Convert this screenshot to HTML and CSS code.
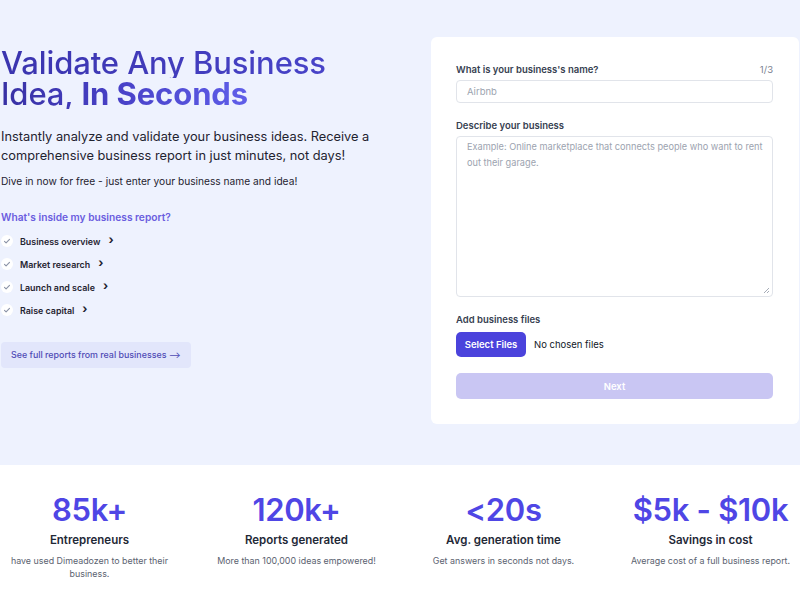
FILE: index.html
```html
<!DOCTYPE html>
<html>
<head>
<meta charset="utf-8">
<link rel="stylesheet" href="styles.css">
</head>
<body>
<div class="hero">
  <div class="container hero-grid">
    <div class="intro">
      <h1 class="title"><span class="line line1">Validate Any Business</span> <span class="line line2">Idea, <strong>In Seconds</strong></span></h1>
      <p class="lead">Instantly analyze and validate your business ideas. Receive a comprehensive business report in just minutes, not days!</p>
      <p class="sub">Dive in now for free - just enter your business name and idea!</p>
      <h3 class="inside">What's inside my business report?</h3>
      <ul class="features">
        <li><span class="check"><svg viewBox="0 0 10 10" width="10" height="10"><path d="M2.5 5.4l1.6 1.5 3.4-3.6" fill="none" stroke="#8b93a7" stroke-width="1.1" stroke-linecap="round" stroke-linejoin="round"/></svg></span>Business overview<span class="chev">›</span></li>
        <li><span class="check"><svg viewBox="0 0 10 10" width="10" height="10"><path d="M2.5 5.4l1.6 1.5 3.4-3.6" fill="none" stroke="#8b93a7" stroke-width="1.1" stroke-linecap="round" stroke-linejoin="round"/></svg></span>Market research<span class="chev">›</span></li>
        <li><span class="check"><svg viewBox="0 0 10 10" width="10" height="10"><path d="M2.5 5.4l1.6 1.5 3.4-3.6" fill="none" stroke="#8b93a7" stroke-width="1.1" stroke-linecap="round" stroke-linejoin="round"/></svg></span>Launch and scale<span class="chev">›</span></li>
        <li><span class="check"><svg viewBox="0 0 10 10" width="10" height="10"><path d="M2.5 5.4l1.6 1.5 3.4-3.6" fill="none" stroke="#8b93a7" stroke-width="1.1" stroke-linecap="round" stroke-linejoin="round"/></svg></span>Raise capital<span class="chev">›</span></li>
      </ul>
      <a class="reports-btn">See full reports from real businesses <span class="arrow">⟶</span></a>
    </div>
    <div class="card">
      <div class="label-row"><label class="label">What is your business's name?</label><span class="step">1/3</span></div>
      <div class="input">Airbnb</div>
      <label class="label label-gap">Describe your business</label>
      <div class="textarea">Example: Online marketplace that connects people who want to rent out their garage.
        <svg class="grip" viewBox="0 0 8 8" width="8" height="8"><path d="M7 2L2 7M7 5L5 7" stroke="#9ca3af" stroke-width="0.9"/></svg>
      </div>
      <label class="label label-gap2">Add business files</label>
      <div class="files-row"><span class="select-btn">Select Files</span><span class="no-files">No chosen files</span></div>
      <div class="next-btn">Next</div>
    </div>
  </div>
</div>
<div class="stats">
  <div class="container stats-grid">
    <div class="stat"><div class="num">85k+</div><div class="stat-title">Entrepreneurs</div><div class="stat-desc">have used Dimeadozen to better their business.</div></div>
    <div class="stat"><div class="num">120k+</div><div class="stat-title">Reports generated</div><div class="stat-desc">More than 100,000 ideas empowered!</div></div>
    <div class="stat"><div class="num">&lt;20s</div><div class="stat-title">Avg. generation time</div><div class="stat-desc">Get answers in seconds not days.</div></div>
    <div class="stat"><div class="num">$5k - $10k</div><div class="stat-title">Savings in cost</div><div class="stat-desc">Average cost of a full business report.</div></div>
  </div>
</div>
</body>
</html>
```
FILE: styles.css
```css
* { box-sizing: border-box; }
html, body { margin: 0; padding: 0; overflow: hidden; }
body { font-family: Inter, "Noto Sans", sans-serif; color: #1f2937; background: #fff; }

.container { width: 828px; margin-left: -14px; }

.hero { background: #eef2fe; height: 465px; padding-top: 37px; }
.hero-grid { display: flex; justify-content: space-between; padding: 0 15px; }

.intro { width: 400px; padding-top: 10px; }
.title { margin: 0; font-size: 31px; line-height: 31px; font-weight: 500; letter-spacing: -0.1px; }
.line { display: block; width: fit-content; -webkit-background-clip: text; background-clip: text; color: transparent; }
.line1 { background-image: linear-gradient(90deg, #3a34ae 0%, #4843c8 100%); }
.line2 { background-image: linear-gradient(90deg, #3730a3 0%, #4942c9 50%, #5f5ee9 100%); }
.line2 strong { font-weight: 700; }

.lead { margin: 18px 0 0; font-size: 12.8px; line-height: 19px; color: #1f2330; width: 400px; }
.sub { margin: 9px 0 0; font-size: 10.2px; line-height: 14px; color: #1f2330; }
.inside { margin: 22px 0 0; font-size: 10.2px; line-height: 14px; font-weight: 600; color: #6a5ddf; }

.features { list-style: none; margin: 10px 0 0; padding: 0; display: flex; flex-direction: column; gap: 9px; }
.features li { display: flex; align-items: center; height: 14px; font-size: 8.9px; font-weight: 600; color: #1f2330; }
.check { width: 12px; height: 12px; border-radius: 50%; background: #fff; display: inline-flex; align-items: center; justify-content: center; margin-right: 7px; }
.chev { margin-left: 8px; font-size: 12px; font-weight: 700; line-height: 10px; position: relative; top: -1px; }

.reports-btn { display: inline-block; margin-top: 25px; height: 26px; padding: 0 10px; background: #e2e6fb; border-radius: 4px; font-size: 8.9px; line-height: 26px; color: #4f4bb5; font-weight: 500; }
.arrow { font-size: 9px; }

.card { width: 368px; height: 387px; background: #fff; border-radius: 6px; padding: 27px 26px 0 25px; }
.label-row { display: flex; justify-content: space-between; align-items: baseline; }
.label { display: block; font-size: 9.5px; line-height: 12px; font-weight: 600; color: #374151; }
.step { font-size: 9.5px; color: #7b8190; }
.label-gap { margin-top: 17px; }
.label-gap2 { margin-top: 17px; }
.input { margin-top: 4px; height: 23px; border: 1px solid #e1e4ea; border-radius: 4px; padding: 0 10px; font-size: 9.5px; line-height: 21px; color: #9ca3af; }
.textarea { position: relative; margin-top: 4px; height: 161px; border: 1px solid #e1e4ea; border-radius: 4px; padding: 2px 1px 4px 10px; font-size: 9.2px; line-height: 16px; color: #9ca3af; }
.grip { position: absolute; right: 2px; bottom: 2px; }

.files-row { display: flex; align-items: center; margin-top: 6px; }
.select-btn { width: 70px; height: 25px; background: #4b43dc; color: #fff; border-radius: 5px; font-size: 9.5px; font-weight: 600; display: flex; align-items: center; justify-content: center; }
.no-files { margin-left: 8px; font-size: 9.5px; color: #111827; }
.next-btn { margin-top: 16px; height: 26px; background: #c9c6f3; border-radius: 5px; color: #fff; font-size: 9.5px; font-weight: 600; display: flex; align-items: center; justify-content: center; }

.stats { background: #fff; }
.stats-grid { display: grid; grid-template-columns: repeat(4, 1fr); padding-top: 25px; }
.stat { text-align: center; }
.num { font-size: 31px; line-height: 40px; font-weight: 600; color: #4f46e5; letter-spacing: -0.3px; }
.stat-title { margin-top: 2px; font-size: 11.5px; line-height: 16px; font-weight: 600; color: #1f2937; }
.stat-desc { margin: 6px auto 0; width: 170px; font-size: 8.9px; line-height: 13px; color: #5b6270; }
```
